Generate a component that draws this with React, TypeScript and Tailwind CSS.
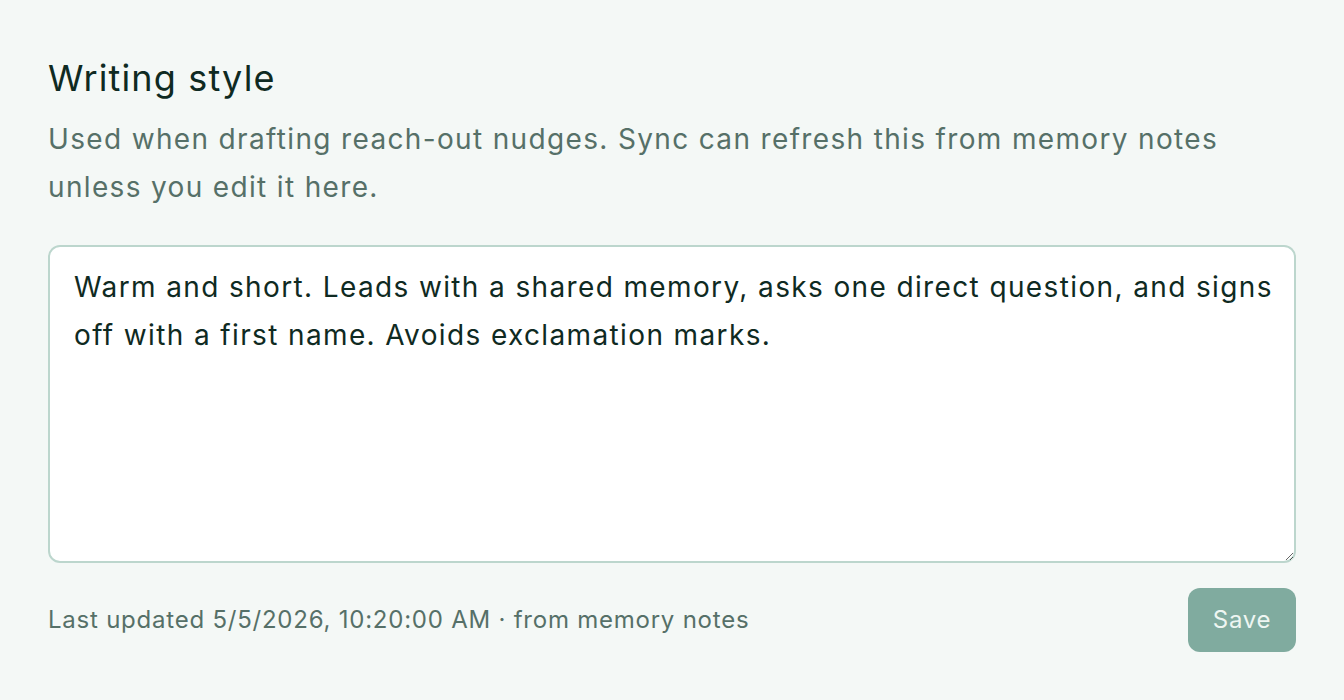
import { useState } from 'react';

export default function App() {
  const [style, setStyle] = useState(
    'Warm and short. Leads with a shared memory, asks one direct question, and signs off with a first name. Avoids exclamation marks.'
  );

  return (
    <main
      className="min-h-[700px] w-full bg-[#f4f8f6] px-12 pt-[50px]"
      style={{ fontFamily: 'Inter, "Noto Sans", sans-serif' }}
    >
      <section>
        <h2 className="text-[36px] leading-[56px] font-normal tracking-[0.032em] text-[#0f2a22]">
          Writing style
        </h2>
        <p className="mt-[9px] text-[28px] leading-[48px] tracking-[0.048em] text-[#567068]">
          Used when drafting reach-out nudges. Sync can refresh this from memory notes
          <br />
          unless you edit it here.
        </p>

        <textarea
          value={style}
          onChange={(e) => setStyle(e.target.value)}
          className="mt-[34px] block h-[318px] w-full rounded-[12px] border-2 border-[#bcd6cd] bg-white pl-6 pr-3 pt-4 text-[28px] leading-[48px] tracking-[0.049em] text-[#0f2a22] focus:outline-none"
        />

        <div className="mt-[25px] flex items-center justify-between">
          <span className="text-[24px] leading-[32px] tracking-[0.032em] text-[#567068]">
            Last updated 5/5/2026, 10:20:00 AM · from memory notes
          </span>
          <button
            disabled
            className="h-16 w-[108px] rounded-[12px] bg-[#80ab9f] text-[24px] tracking-[0.03em] text-[#eef6f2]"
          >
            Save
          </button>
        </div>
      </section>
    </main>
  );
}
